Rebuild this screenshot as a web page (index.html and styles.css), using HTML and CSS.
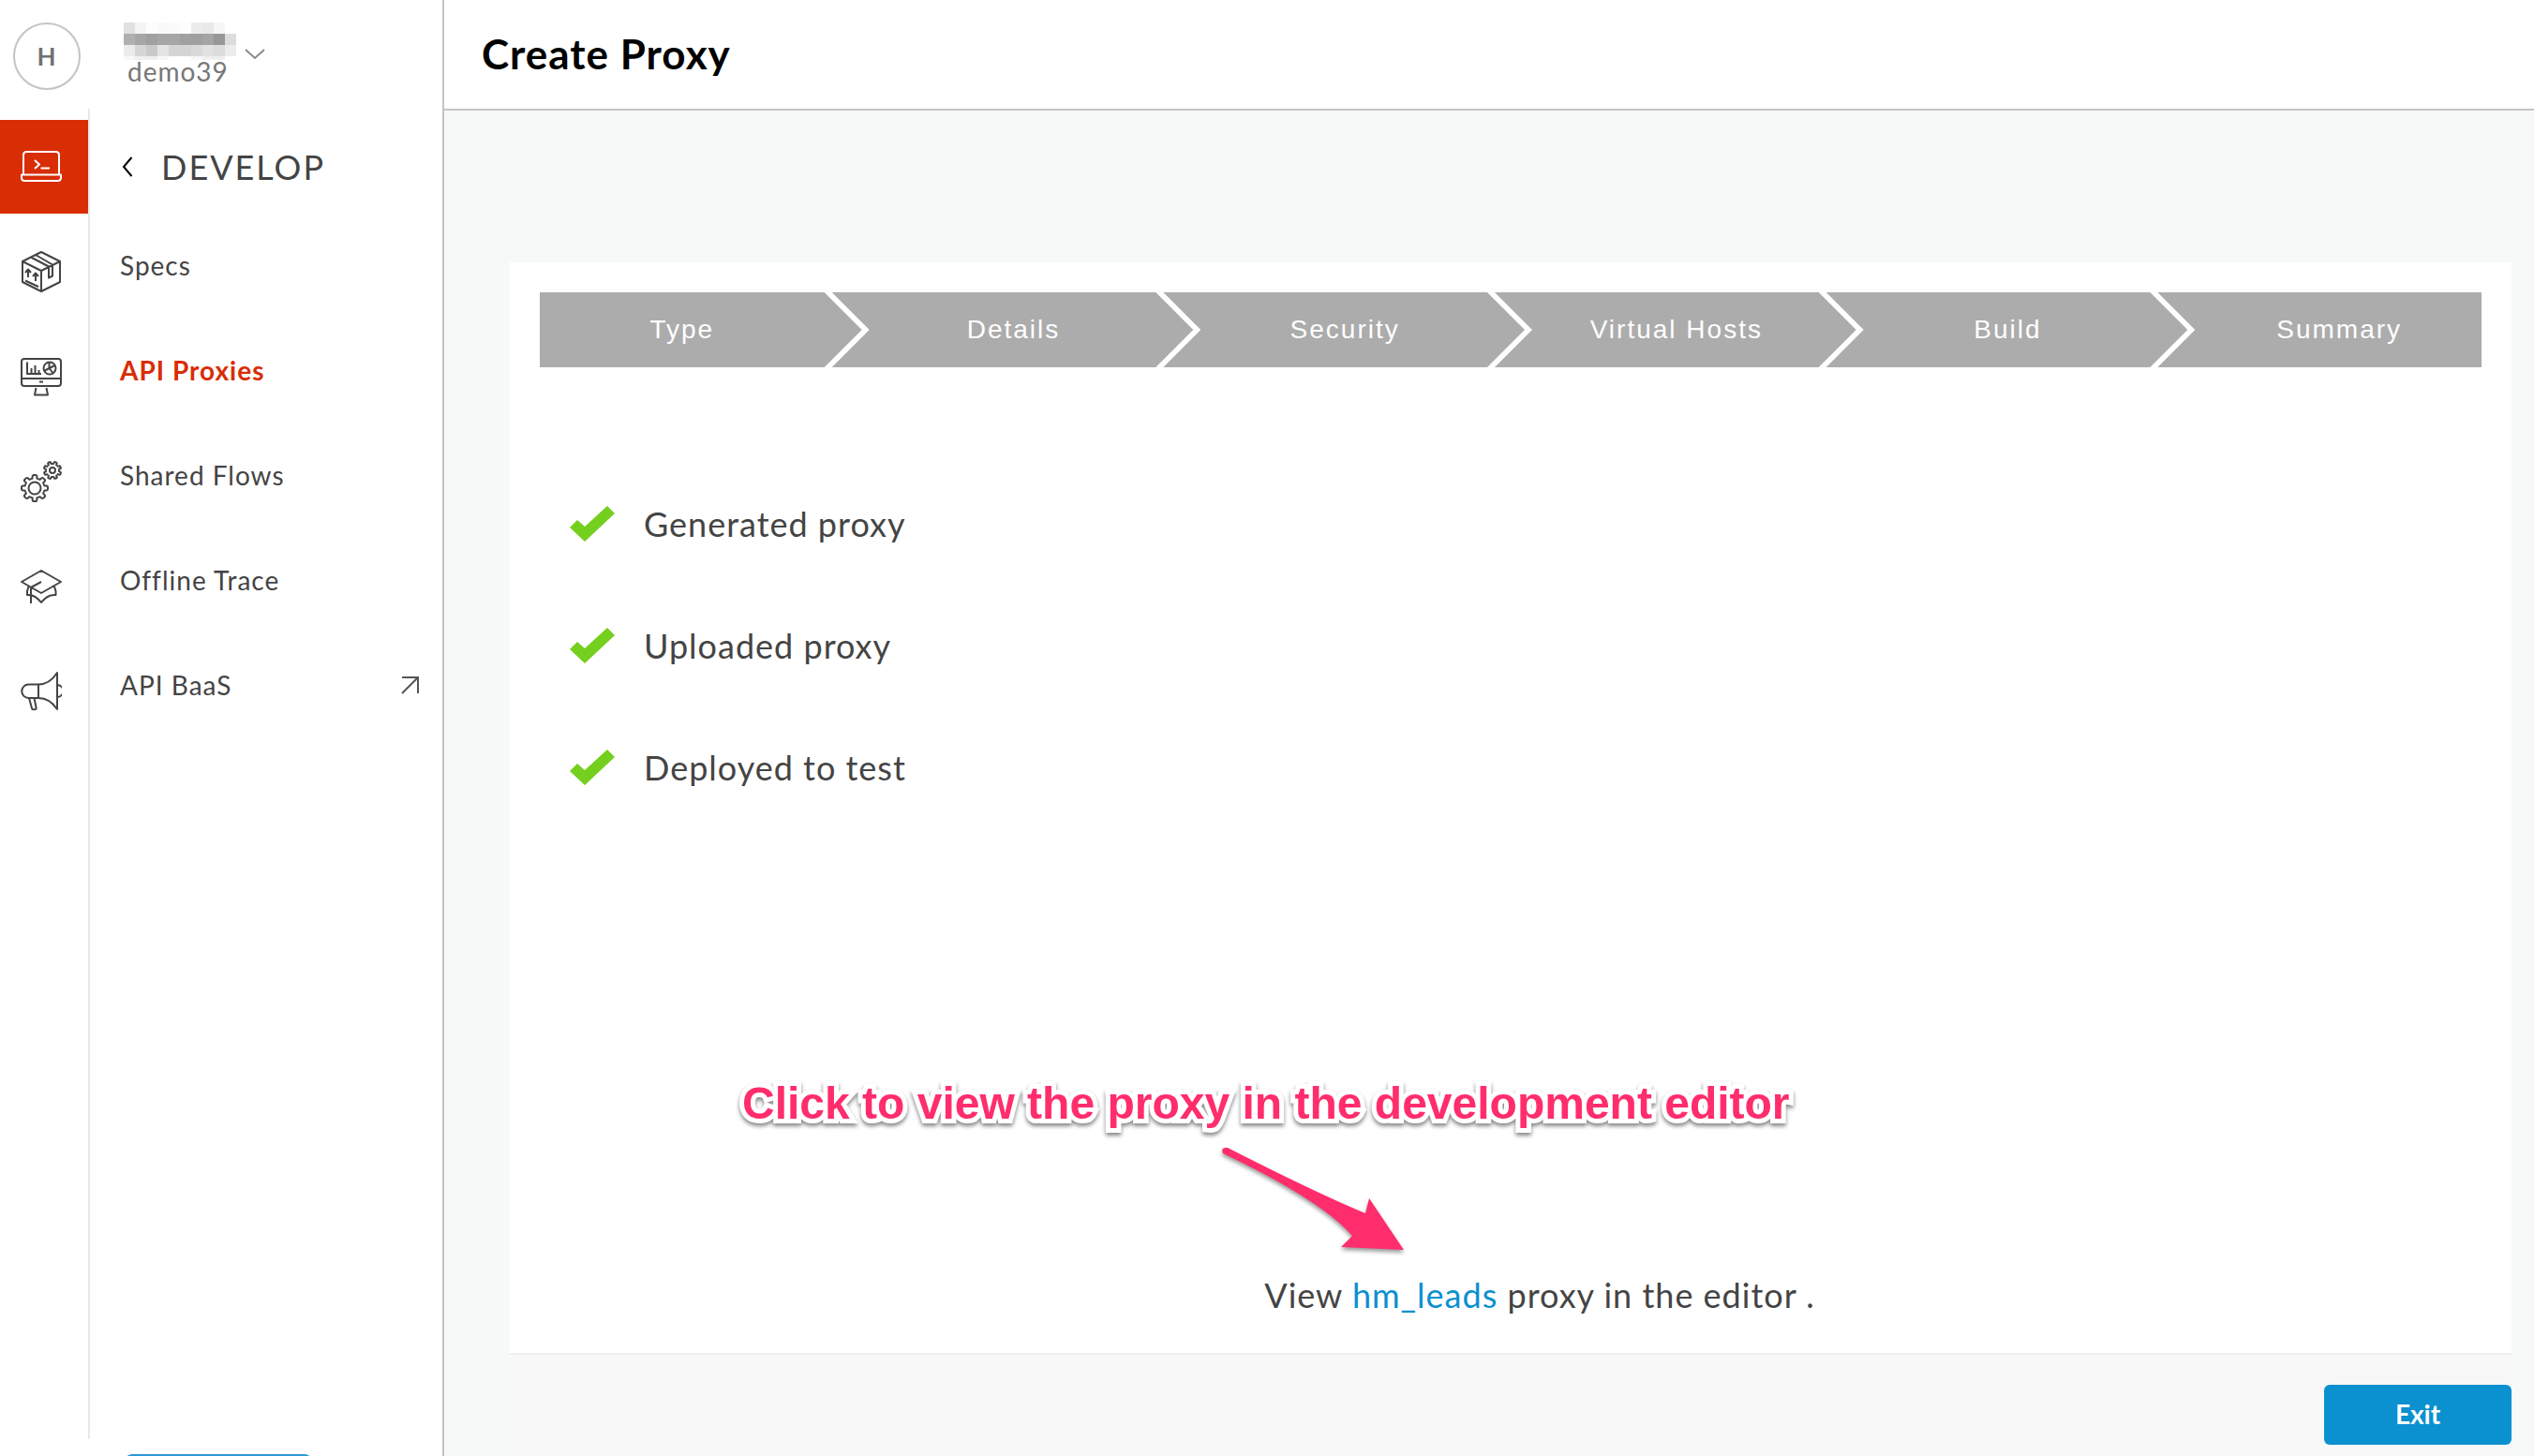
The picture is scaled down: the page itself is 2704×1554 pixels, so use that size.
FILE: index.html
```html
<!DOCTYPE html>
<html lang="en">
<head>
<meta charset="utf-8">
<title>Create Proxy</title>
<link rel="stylesheet" href="styles.css">
</head>
<body>
<div class="app">
  <aside class="sidebar">
    <header class="account">
      <span class="avatar">H</span>
      <div class="org">
        <svg class="org-hidden" width="128" height="40" viewBox="0 0 128 40" shape-rendering="crispEdges" aria-hidden="true">
          <path fill="#e1e1e1" d="M8 0h12v12H8z"/>
          <path fill="#f4f4f4" d="M20 0h12v12H20z"/><path fill="#fdfdfd" d="M32 0h12v12H32zM68 0h12v12H68z"/>
          <path fill="#f9f9f9" d="M44 0h12v12H44z"/><path fill="#fbfbfb" d="M56 0h12v12H56z"/>
          <path fill="#ececec" d="M80 0h12v12H80z"/><path fill="#e9e9e9" d="M92 0h12v12H92z"/><path fill="#f6f6f6" d="M104 0h12v12h-12z"/>
          <path fill="#b0b0b0" d="M8 12h12v12H8z"/><path fill="#a7a7a7" d="M20 12h12v12H20z"/>
          <path fill="#a0a0a0" d="M32 12h12v12H32zM68 12h24v12H68z"/><path fill="#a6a6a6" d="M44 12h24v12H44z"/>
          <path fill="#a4a4a4" d="M92 12h12v12H92z"/><path fill="#979797" d="M104 12h12v12h-12z"/><path fill="#dcdcdc" d="M116 12h12v12h-12z"/>
          <path fill="#ececec" d="M8 24h12v12H8zM116 24h12v12h-12z"/><path fill="#d6d6d6" d="M20 24h12v12H20z"/>
          <path fill="#c9c9c9" d="M32 24h12v12H32z"/><path fill="#e4e4e4" d="M44 24h12v12H44z"/>
          <path fill="#d4d4d4" d="M56 24h24v12H56z"/><path fill="#dadada" d="M80 24h12v12H80z"/>
          <path fill="#e1e1e1" d="M92 24h12v12H92z"/><path fill="#dcdcdc" d="M104 24h12v12h-12z"/>
          <path fill="#f7f7f7" d="M8 36h12v4H8zM44 36h12v4H44zM80 36h12v4H80z"/><path fill="#efefef" d="M20 36h24v4H20zM92 36h24v4H92z"/>
        </svg>
        <span class="org-name">demo39</span>
      </div>
      <button class="org-toggle" type="button" aria-label="Switch organization">
        <svg width="22" height="14" viewBox="0 0 22 14" fill="none" stroke="#8a8a8a" stroke-width="2"><path d="M1 2l10 9 10-9"/></svg>
      </button>
    </header>
    <div class="nav">
      <nav class="rail" aria-label="Sections">
        <a class="rail-link active" href="#develop" aria-label="Develop">
          <svg class="icon" viewBox="0 0 44 44"><path d="M3 30V9.500q0-3.500 3.500-3.500h31q3.500 0 3.500 3.500V30M1 30.500h42v3q0 3.500-3.500 3.500h-35Q1 37 1 33.500zM15 15l5 4.500-5 4.500M21.500 23.500h9.500"/></svg>
        </a>
        <a class="rail-link" href="#publish" aria-label="Publish">
          <svg class="icon" viewBox="0 0 44 44"><path d="M22 1l20 10v22L22 43 2 33V11zM2 11l20 10 20-10M22 21v22M16 4l18 10.500v12l-4 2v-12L11 6.500M8 28V20M5 23l3-3.500 3 3.500M16 32v-8M13 27l3-3.500 3 3.500M5 31.500l14 6.500"/></svg>
        </a>
        <a class="rail-link" href="#analyze" aria-label="Analyze">
          <svg class="icon" viewBox="0 0 44 44"><path d="M4 3h36q3 0 3 3v23q0 3-3 3H4q-3 0-3-3V6q0-3 3-3zM1 24h42M20 27.500h4M16.500 34l-1.500 7.500h14L27.500 34M7 6.500V19h15M11.500 19v-6M15.500 19v-9M19.500 19v-4"/><circle cx="31" cy="13" r="6.500"/><path d="M30.500 6.500V13l6-3M30.500 13l-5.500 3M30.500 13l4 5"/></svg>
        </a>
        <a class="rail-link" href="#admin" aria-label="Admin">
          <svg class="icon" viewBox="0 0 44 44">
            <defs>
              <path id="tooth" vector-effect="non-scaling-stroke" d="M-4-9.700L-2.400-10.500V-12.500Q-2.400-14-1-14H1Q2.400-14 2.400-12.500V-10.500L4-9.700"/>
              <g id="teeth">
                <use href="#tooth"/><use href="#tooth" transform="rotate(45)"/><use href="#tooth" transform="rotate(90)"/><use href="#tooth" transform="rotate(135)"/>
                <use href="#tooth" transform="rotate(180)"/><use href="#tooth" transform="rotate(225)"/><use href="#tooth" transform="rotate(270)"/><use href="#tooth" transform="rotate(315)"/>
              </g>
            </defs>
            <use href="#teeth" transform="translate(15 29)"/>
            <circle cx="15" cy="29" r="6.500"/>
            <use href="#teeth" transform="translate(34 10) rotate(22) scale(.66)"/>
            <circle cx="34" cy="10" r="3"/>
          </svg>
        </a>
        <a class="rail-link" href="#learn" aria-label="Learn">
          <svg class="icon" viewBox="0 0 44 44"><path d="M1 17L22 5l21 12-21 12zM22 17l-11 6v17M8.500 22L7 27v4q8-1 15 8 7-9 15.500-8v-4L36 22"/></svg>
        </a>
        <a class="rail-link" href="#news" aria-label="News">
          <svg class="icon" viewBox="0 0 44 44"><path d="M19 14.500H8.500a7 7 0 0 0 0 14.500H19zM19 14.500q12 0 20-12.500v39q-8-12-20-12M39 15a6 6 0 0 1 0 13M9 29l3 11q.300 1.500 1.800 1.300l2-.300q1-.400.800-1.500L14.500 29"/></svg>
        </a>
      </nav>
      <nav class="menu" aria-label="Develop">
        <a class="menu-back" href="#home">
          <svg width="12" height="22" viewBox="0 0 12 22" fill="none" stroke="#000" stroke-width="2"><path d="M10.500 1L2 11l8.500 10"/></svg>
          <span>DEVELOP</span>
        </a>
        <a class="menu-link" href="#specs">Specs</a>
        <a class="menu-link current" href="#proxies">API Proxies</a>
        <a class="menu-link" href="#flows">Shared Flows</a>
        <a class="menu-link" href="#trace">Offline Trace</a>
        <a class="menu-link" href="#baas">API BaaS
          <svg width="20" height="20" viewBox="0 0 20 20" fill="none" stroke="#555" stroke-width="2"><path d="M1 2h17v17M18 2L1 19"/></svg>
        </a>
      </nav>
    </div>
    <button class="help" type="button" aria-label="Help"></button>
  </aside>

  <main class="main">
    <header class="topbar"><h1>Create Proxy</h1></header>
    <div class="content">
      <section class="card">
        <ol class="steps">
          <li>Type</li>
          <li>Details</li>
          <li>Security</li>
          <li>Virtual Hosts</li>
          <li>Build</li>
          <li>Summary</li>
        </ol>
        <ul class="results">
          <li><svg class="check" viewBox="0 0 48 38"><path d="M8 15l8 7L40 0l8 8-32 30L0 23z"/></svg>Generated proxy</li>
          <li><svg class="check" viewBox="0 0 48 38"><path d="M8 15l8 7L40 0l8 8-32 30L0 23z"/></svg>Uploaded proxy</li>
          <li><svg class="check" viewBox="0 0 48 38"><path d="M8 15l8 7L40 0l8 8-32 30L0 23z"/></svg>Deployed to test</li>
        </ul>
        <p class="view">View <a href="#hm_leads">hm_leads</a> proxy in the editor .</p>
        <div class="callout">
          <p>Click to view the proxy in the development editor</p>
          <svg width="196" height="116" viewBox="0 0 196 116"><path d="M8 1Q100 48 155 71L159 55 196 110 129 107 141 95Q108 57 3 7Q0 0 8 1z"/></svg>
        </div>
      </section>
      <footer class="actions"><button class="exit" type="button">Exit</button></footer>
    </div>
  </main>
</div>
</body>
</html>
```
FILE: styles.css
```css
* { box-sizing: border-box; }

body {
  margin: 0;
  font-family: Lato, "Open Sans", sans-serif;
  font-size: 28px;
  letter-spacing: 1px;
  color: #444;
  background: #fff;
}

a { color: inherit; text-decoration: none; }
button { font: inherit; letter-spacing: normal; border: 0; padding: 0; cursor: pointer; }
ol, ul { list-style: none; margin: 0; padding: 0; }
h1, p { margin: 0; }
svg { display: block; flex: none; }

.app { display: flex; height: 100vh; overflow: hidden; }

/* Sidebar */
.sidebar {
  display: flex;
  flex-direction: column;
  flex: none;
  width: 474px;
  border-right: 2px solid #c4c4c4;
  overflow: hidden;
}
.account {
  display: flex;
  flex: none;
  height: 116px;
  padding: 24px 14px 0;
}
.avatar {
  display: flex;
  align-items: center;
  justify-content: center;
  width: 72px;
  height: 72px;
  border: 2px solid #c4c4c4;
  border-radius: 50%;
  font-size: 26px;
  font-weight: 700;
  color: #717171;
}
.org { margin-left: 38px; }
.org-name {
  display: block;
  padding-left: 12px;
  line-height: 24px;
  color: #777;
}
.org-toggle {
  align-self: flex-start;
  margin: 27px 0 0 9px;
  background: none;
}

.nav { display: flex; flex: 1; min-height: 0; }
.rail {
  display: flex;
  flex-direction: column;
  gap: 12px;
  width: 96px;
  padding-top: 12px;
  border-right: 2px solid #e8e8e8;
}
.rail-link {
  display: flex;
  align-items: center;
  height: 100px;
  padding-left: 22px;
  color: #444;
}
.rail-link.active { background: #d92d05; color: #fff; }
.icon {
  width: 44px;
  height: 44px;
  fill: none;
  stroke: currentColor;
  stroke-width: 2;
  stroke-linejoin: round;
}

.menu { flex: 1; padding: 12px 24px 0 32px; }
.menu-back {
  display: flex;
  align-items: center;
  gap: 30px;
  height: 100px;
  padding-left: 2px;
  font-size: 36px;
  letter-spacing: 2px;
}
.menu-link {
  display: flex;
  align-items: center;
  justify-content: space-between;
  height: 112px;
  padding-bottom: 3px;
}
.menu-link.current { color: #d92d05; font-weight: 700; }

.help {
  flex: none;
  width: 200px;
  height: 48px;
  margin: 16px 0 -46px 133px;
  border-radius: 8px;
  background: #2d97d8;
}

/* Main area */
.main {
  display: flex;
  flex-direction: column;
  flex: 1;
  min-width: 0;
  background: #f7f9f9;
}
.topbar {
  display: flex;
  align-items: center;
  flex: none;
  height: 118px;
  padding: 0 40px 2px;
  background: #fff;
  border-bottom: 2px solid #c4c4c4;
}
.topbar h1 { font-size: 44px; font-weight: 700; color: #000; }
.content {
  display: flex;
  flex-direction: column;
  flex: 1;
  padding: 162px 24px 0 70px;
}
.card {
  position: relative;
  display: flex;
  flex-direction: column;
  flex: 1;
  padding: 32px 32px 38px;
  background: #fff;
  border-bottom: 2px solid #eee;
}

/* Wizard progress */
.steps {
  display: grid;
  grid-template-columns: repeat(6, 1fr);
  gap: 50px;
  background: #acacac;
  color: #fff;
  font-family: "Liberation Sans", Arial, sans-serif;
  letter-spacing: 2px;
}
.steps li {
  position: relative;
  height: 80px;
  line-height: 80px;
  text-align: center;
}
.steps li:not(:last-child)::after {
  content: "";
  position: absolute;
  top: 0;
  left: 100%;
  width: 48px;
  height: 80px;
  background: #fff;
  clip-path: polygon(0 0, 8px 0, 48px 40px, 8px 80px, 0 80px, 40px 40px);
}

.results { padding: 102px 32px 0; font-size: 36px; }
.results li {
  display: flex;
  align-items: center;
  gap: 31px;
  height: 130px;
}
.check { width: 48px; height: 38px; fill: #74cf1f; }

.view {
  margin-top: auto;
  padding-left: 62px;
  text-align: center;
  font-size: 36px;
  line-height: 48px;
}
.view a { color: #0b90d0; }

.callout {
  position: absolute;
  bottom: 104px;
  left: 248px;
  font: 700 48px/56px "Liberation Sans", Arial, sans-serif;
  letter-spacing: normal;
  color: #ff2d6c;
}
.callout p {
  paint-order: stroke fill;
  -webkit-text-stroke: 10px #fff;
  filter: drop-shadow(0 3px 2px #888);
}
.callout svg {
  margin: 18px 0 0 510px;
  fill: currentColor;
  filter: drop-shadow(0 3px 2px #999);
}

.actions {
  display: flex;
  justify-content: flex-end;
  flex: none;
  padding: 32px 0 12px;
  background: #f8f8f8;
}
.exit {
  width: 200px;
  height: 64px;
  padding-bottom: 2px;
  border-radius: 6px;
  background: #0b90d0;
  color: #fff;
  font-weight: 700;
}
```
